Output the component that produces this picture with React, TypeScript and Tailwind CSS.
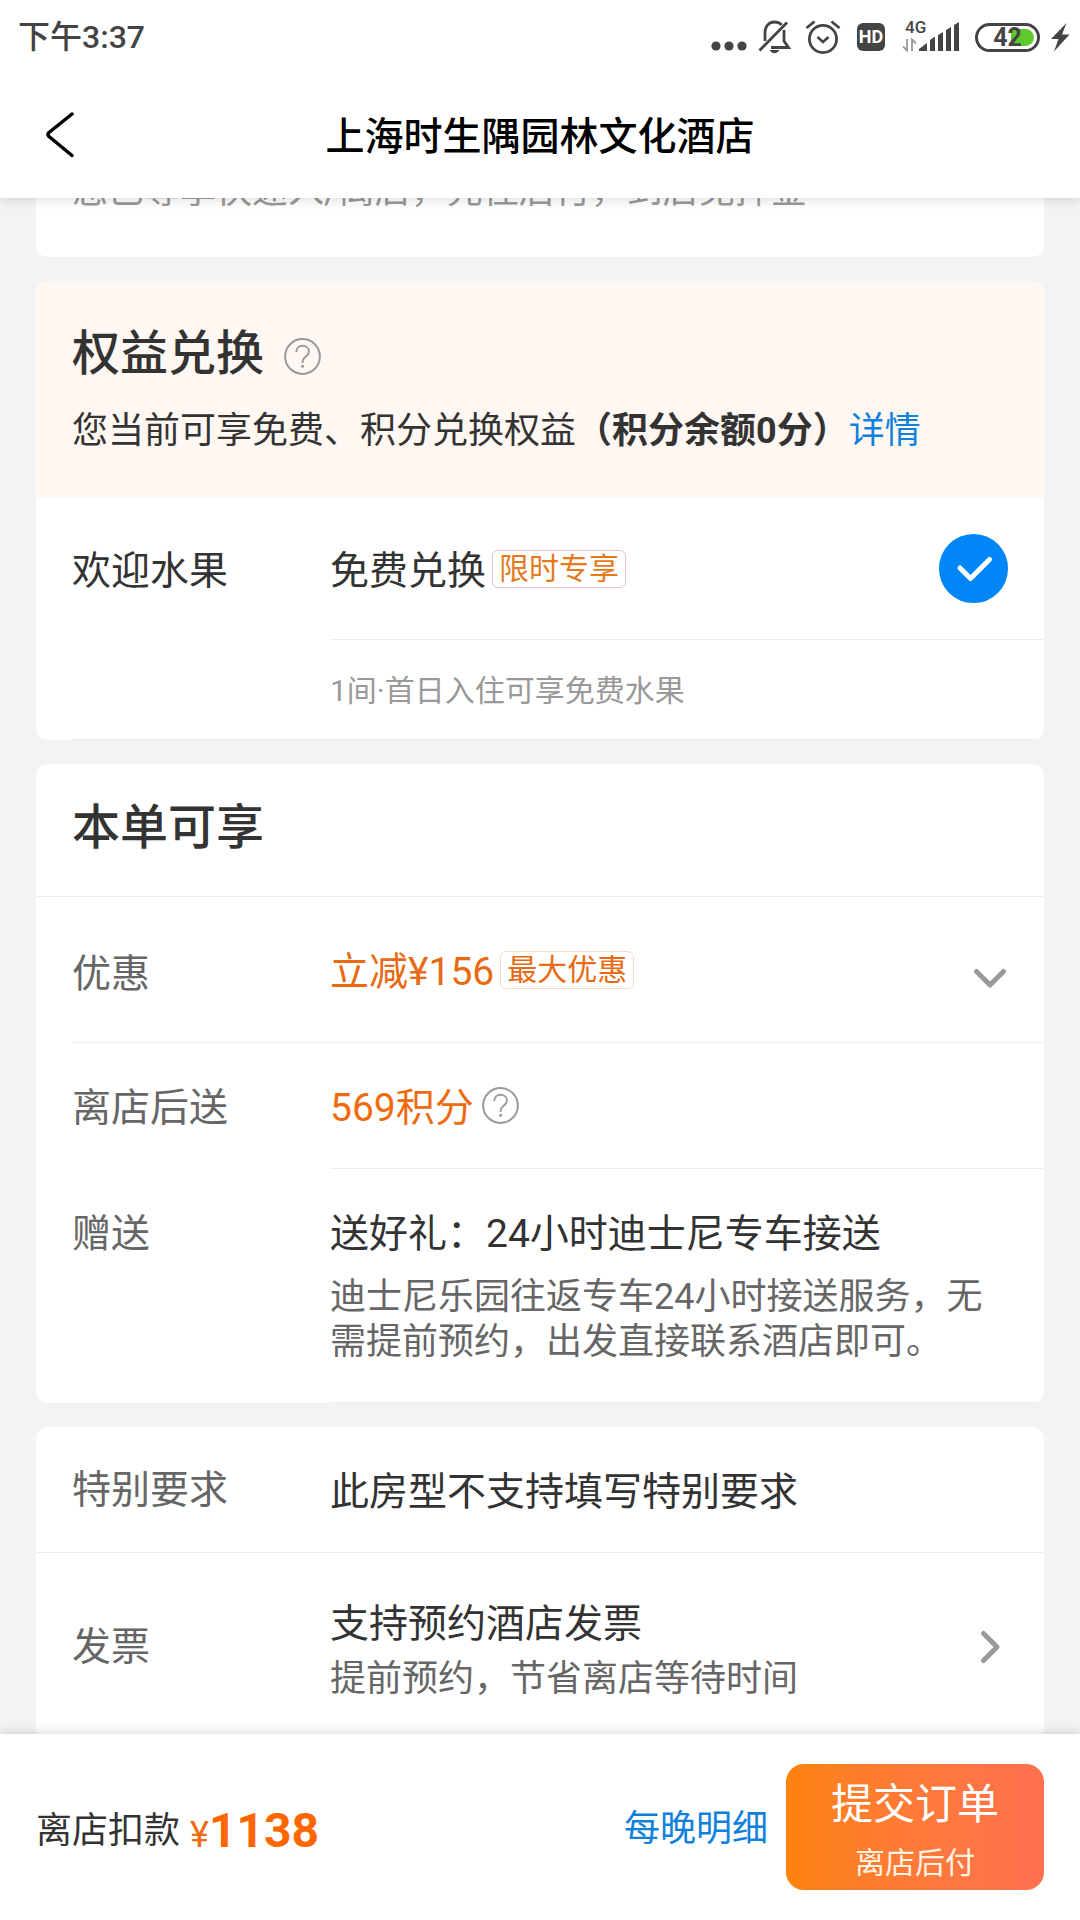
import { useState } from "react";
import type { ReactNode } from "react";

interface RowProps {
  label?: string;
  labelClass?: string;
  children: ReactNode;
}

// Label on the left, value on the right, shared by all cards
function Row({ label, labelClass = "text-[#666]", children }: RowProps) {
  return (
    <div className="flex items-stretch pl-9 text-[39px] leading-[56px]">
      <div className={`w-[258px] shrink-0 flex items-center ${labelClass}`}>
        {label}
      </div>
      {children}
    </div>
  );
}

function Tag({ className, children }: { className: string; children: ReactNode }) {
  return (
    <span
      className={`ml-1.5 px-1.5 border rounded-md text-[30px] leading-9 whitespace-nowrap ${className}`}
    >
      {children}
    </span>
  );
}

function HelpButton({ className = "" }: { className?: string }) {
  return (
    <button type="button" aria-label="说明" className={`shrink-0 ${className}`}>
      <svg viewBox="0 0 38 38" className="w-[38px] h-[38px]" fill="none" stroke="#999">
        <circle cx="18.5" cy="18.5" r="17.4" strokeWidth="2" />
        <path
          d="M12.300 14.100c0-3.900 2.700-6.300 6.300-6.300s6.300 2.300 6.300 5.600c0 2.600-1.500 3.900-3.300 5.400-1.900 1.600-3 2.600-3 5.200v.9"
          strokeWidth="1.9"
        />
        <circle cx="18.6" cy="28.300" r="1.5" fill="#999" stroke="none" />
      </svg>
    </button>
  );
}

function StatusBar() {
  return (
    <div className="h-[74px] pl-[18px] pr-2.5 flex items-center justify-between text-[#444]">
      <span className="text-[32px] leading-9 font-medium">下午3:37</span>

      <div className="flex items-center">
        <svg viewBox="0 0 36 36" className="w-9 h-9" fill="#444">
          <circle cx="5" cy="27" r="4.6" />
          <circle cx="18" cy="27" r="4.6" />
          <circle cx="31" cy="27" r="4.6" />
        </svg>

        {/* Muted bell */}
        <svg viewBox="0 0 36 36" className="ml-2.5 w-9 h-9" fill="none" stroke="#444" strokeWidth="2.8">
          <path d="M8 22V14C8 7 12 3 17.500 3c3 0 5.500 1 7 3" />
          <path d="M27 11v11l4.500 6.500H14" />
          <path d="M2.500 31.500 30 3.500" />
          <path d="M12.500 31h10c-1 2-3 3.200-5 3.200s-4-1.200-5-3.200z" fill="#444" stroke="none" />
        </svg>

        {/* Alarm clock */}
        <svg viewBox="0 0 36 36" className="ml-3 w-9 h-9" fill="none" stroke="#444" strokeWidth="2.8">
          <circle cx="18" cy="20" r="13.600" />
          <path d="m12.500 18 5.500 5 5.500-5" strokeWidth="2.600" />
          <path d="M1.500 9 9.500 2.500M34.500 9l-8-6.500" />
        </svg>

        <span className="ml-4 w-7 h-7 rounded-md bg-[#444] text-white text-lg leading-7 font-bold text-center">
          HD
        </span>

        {/* Mobile signal */}
        <div className="ml-[18px] relative w-[58px] h-9">
          <span className="absolute left-0.5 top-0 text-[17px] leading-4 font-medium">4G</span>
          <svg viewBox="0 0 58 36" className="w-[58px] h-9" fill="#444">
            <path d="M16 32v-2l8-6v8zM27 21l5-3.500V32h-5zM35 16l5-3v19h-5zM43 11l5-3v24h-5zM51 6l5-3v29h-5z" />
            <path d="M4 20v11.500L0 27.500M9 32V20.500l4 4" fill="none" stroke="#999" strokeWidth="1.800" />
          </svg>
        </div>

        {/* Battery */}
        <div className="ml-3.5 relative w-[65px] h-[29px] rounded-full border-3 border-[#444]">
          <div className="absolute right-[3px] inset-y-[3px] w-[23px] rounded-r-full bg-[#5fc92b]" />
          <span className="absolute inset-0 text-center text-[25px] leading-[23px] font-bold">42</span>
        </div>
        <svg viewBox="0 0 20 30" className="ml-2.5 w-5 h-[30px]" fill="#444">
          <path d="M16.500 1 1 17h7.500L4 29.500 19.500 12.500H12z" />
        </svg>
      </div>
    </div>
  );
}

export default function App() {
  const [fruit, setFruit] = useState(true);

  return (
    <div className="h-screen flex flex-col bg-[#f3f3f5] text-[#333] font-['Roboto','Noto_Sans_CJK_SC',sans-serif]">
      <header className="relative z-10 shrink-0 bg-white shadow-[0_0_12px_rgba(0,0,0,0.18)]">
        <StatusBar />
        <div className="h-[124px] px-9 grid grid-cols-[60px_1fr_60px] items-center">
          <button type="button" aria-label="返回">
            <svg
              viewBox="0 0 48 48"
              className="w-12 h-12"
              fill="none"
              stroke="#000"
              strokeWidth="3.500"
              strokeLinecap="round"
              strokeLinejoin="round"
            >
              <path d="M36 2 13 20.500q-2 2 0 4L36 43.500" />
            </svg>
          </button>
          <h1 className="pt-0.5 text-[39px] leading-[56px] font-medium text-black text-center whitespace-nowrap">
            上海时生隅园林文化酒店
          </h1>
        </div>
      </header>

      <main className="flex-1 min-h-0 overflow-y-auto [scrollbar-width:none] px-9">
        <div className="flex flex-col gap-6">
          <section className="-mt-[34px] px-9 pb-[39px] bg-white rounded-xl text-4xl leading-[54px] text-[#999]">
            您已尊享快速入/离店，先住后付，到店免押金
          </section>

          {/* Benefits */}
          <section className="bg-white rounded-xl overflow-hidden">
            <div className="px-9 pt-[37px] pb-[39px] bg-[#fff7f1]">
              <div className="flex items-center">
                <h2 className="text-5xl leading-[72px] font-medium">权益兑换</h2>
                <HelpButton className="ml-5 mt-1.5" />
              </div>
              <p className="mt-[13px] text-4xl leading-[56px]">
                您当前可享免费、积分兑换权益
                <strong className="font-bold">（积分余额0分）</strong>
                <a href="#benefits" className="text-[#0f80dc]">详情</a>
              </p>
            </div>

            <Row label="欢迎水果" labelClass="pt-1 text-[#333]">
              <label
                htmlFor="fruit"
                className="flex-1 h-[142px] pr-9 flex items-center border-b border-[#ebebeb]"
              >
                <span className="pt-1">免费兑换</span>
                <Tag className="border-[#e6bfdc] text-[#e57a1c]">限时专享</Tag>
                <span className="relative ml-auto w-[69px] h-[69px]">
                  <input
                    id="fruit"
                    type="checkbox"
                    checked={fruit}
                    onChange={(e) => setFruit(e.target.checked)}
                    className="block w-full h-full appearance-none rounded-full border-2 border-[#ccc] checked:border-[#0086f6] checked:bg-[#0086f6]"
                  />
                  {fruit && (
                    <svg
                      viewBox="0 0 69 69"
                      className="absolute inset-0 pointer-events-none"
                      fill="none"
                      stroke="#fff"
                      strokeWidth="5"
                      strokeLinecap="round"
                      strokeLinejoin="round"
                    >
                      <path d="M21 34 31.500 44.500 50.500 25.500" />
                    </svg>
                  )}
                </span>
              </label>
            </Row>
            <div className="ml-9 pl-[258px] pt-0.5 h-[100px] flex items-center border-b border-[#ebebeb] text-3xl text-[#999]">
              1间·首日入住可享免费水果
            </div>
          </section>

          {/* Included with this order */}
          <section className="bg-white rounded-xl overflow-hidden">
            <h2 className="px-9 pt-7 pb-8 text-5xl leading-[72px] font-medium border-b border-[#ebebeb]">
              本单可享
            </h2>
            <Row label="优惠" labelClass="pt-2 text-[#666]">
              <div className="flex-1 h-[145px] pr-9 flex items-center text-[#e86a14]">
                <span className="pt-1">立减¥156</span>
                <Tag className="border-[#f5dcc6]">最大优惠</Tag>
                <button type="button" aria-label="展开优惠" className="ml-auto mt-4">
                  <svg
                    viewBox="0 0 36 36"
                    className="w-9 h-9"
                    fill="none"
                    stroke="#999"
                    strokeWidth="5"
                    strokeLinecap="round"
                    strokeLinejoin="round"
                  >
                    <path d="M4.500 11.500 18 25 31.500 11.500" />
                  </svg>
                </button>
              </div>
            </Row>
            <div className="ml-9 border-t border-[#ebebeb]" />
            <Row label="离店后送" labelClass="pt-1 text-[#666]">
              <div className="flex-1 h-[126px] pr-9 flex items-center border-b border-[#ebebeb] text-[#f06a10]">
                <span className="pt-1">569积分</span>
                <HelpButton className="ml-2" />
              </div>
            </Row>
            <div className="flex pl-9 text-[39px] leading-[56px]">
              <div className="w-[258px] shrink-0 pt-[37px] text-[#666]">赠送</div>
              <div className="flex-1 pt-[37px] pr-9 pb-[37px] border-b border-[#ebebeb]">
                送好礼：24小时迪士尼专车接送
                <p className="mt-[13px] text-4xl leading-[45px] text-[#666]">
                  迪士尼乐园往返专车24小时接送服务，无需提前预约，出发直接联系酒店即可。
                </p>
              </div>
            </div>
          </section>

          {/* Requests and invoice */}
          <section className="bg-white rounded-xl overflow-hidden">
            <div className="border-b border-[#ebebeb]">
              <Row label="特别要求">
                <div className="h-[125px] pt-1 flex items-center">此房型不支持填写特别要求</div>
              </Row>
            </div>
            <Row label="发票">
              <div className="flex-1 h-[188px] pr-9 flex items-center justify-between">
                <div className="pt-2">
                  支持预约酒店发票
                  <p className="text-4xl leading-[54px] text-[#666]">
                    提前预约，节省离店等待时间
                  </p>
                </div>
                <button type="button" aria-label="发票详情">
                  <svg
                    viewBox="0 0 36 36"
                    className="w-9 h-9"
                    fill="none"
                    stroke="#999"
                    strokeWidth="5"
                    strokeLinecap="round"
                    strokeLinejoin="round"
                  >
                    <path d="M11.500 4.500 25 18 11.500 31.500" />
                  </svg>
                </button>
              </div>
            </Row>
          </section>
        </div>
      </main>

      <footer className="relative z-10 shrink-0 px-9 py-[30px] flex items-center bg-white shadow-[0_0_12px_rgba(0,0,0,0.18)]">
        <div className="pt-2 flex items-center">
          <span className="text-4xl leading-[54px]">离店扣款</span>
          <span className="ml-2.5 mt-2 text-4xl text-[#f06a10]">¥</span>
          <strong className="text-5xl font-bold text-[#ff6600]">1138</strong>
        </div>
        <a href="#nightly" className="ml-auto mr-[18px] pt-1 text-4xl leading-[54px] text-[#0f80dc]">
          每晚明细
        </a>
        <button
          type="submit"
          className="w-[258px] h-[126px] pt-1 flex flex-col items-center justify-center gap-3 rounded-[18px] bg-linear-to-r from-[#ff8309] to-[#ff704f] text-white"
        >
          <span className="text-[42px] leading-[56px]">提交订单</span>
          <span className="text-3xl leading-9 text-[#fff3e4]">离店后付</span>
        </button>
      </footer>
    </div>
  );
}
